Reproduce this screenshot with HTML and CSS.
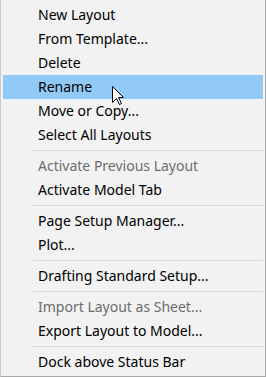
FILE: index.html
```html
<!DOCTYPE html>
<html>
<head>
<meta charset="utf-8">
<link rel="stylesheet" href="styles.css">
</head>
<body>
<div class="menu">
  <div class="item">New Layout</div>
  <div class="item">From Template...</div>
  <div class="item">Delete</div>
  <div class="item hover">Rename</div>
  <div class="item">Move or Copy...</div>
  <div class="item">Select All Layouts</div>
  <div class="sep"></div>
  <div class="item disabled">Activate Previous Layout</div>
  <div class="item">Activate Model Tab</div>
  <div class="sep"></div>
  <div class="item">Page Setup Manager...</div>
  <div class="item">Plot...</div>
  <div class="sep"></div>
  <div class="item">Drafting Standard Setup...</div>
  <div class="sep"></div>
  <div class="item disabled">Import Layout as Sheet...</div>
  <div class="item">Export Layout to Model...</div>
  <div class="sep"></div>
  <div class="item">Dock above Status Bar</div>
  <svg class="cursor" width="13" height="20" viewBox="0 0 13 20">
    <path d="M0.5 0.5 L0.5 16.5 L4.5 12.5 L7.5 18.5 L9.5 17.5 L6.5 11.5 L11.5 11.5 Z" fill="#fff" stroke="#000" stroke-width="1" stroke-linejoin="miter"/>
  </svg>
</div>
</body>
</html>
```

FILE: styles.css
```css
html, body {
  margin: 0;
  padding: 0;
  background: #f2f2f2;
}
.menu {
  position: relative;
  width: 264px;
  height: 371px;
  padding-top: 3px;
  padding-bottom: 2px;
  background: #f2f2f2;
  border-left: 1px solid #cccccc;
  border-right: 1px solid #a8a8a8;
  border-bottom: 1px solid #a8a8a8;
  font-family: "Noto Sans", "Open Sans", sans-serif;
  font-size: 14px;
  color: #000;
}
.item {
  height: 24px;
  line-height: 24px;
  margin: 0 2px;
  padding-left: 35px;
  white-space: nowrap;
}
.item.hover {
  background: #91c9f7;
}
.item.disabled {
  color: #6d6d6d;
}
.sep {
  height: 7px;
  display: flex;
  align-items: center;
  padding-left: 32px;
  padding-right: 2px;
}
.sep::before {
  content: "";
  display: block;
  flex: 1;
  height: 1px;
  margin-top: -1px;
  background: #d7d7d7;
}
.cursor {
  position: absolute;
  left: 111px;
  top: 86px;
}
```
